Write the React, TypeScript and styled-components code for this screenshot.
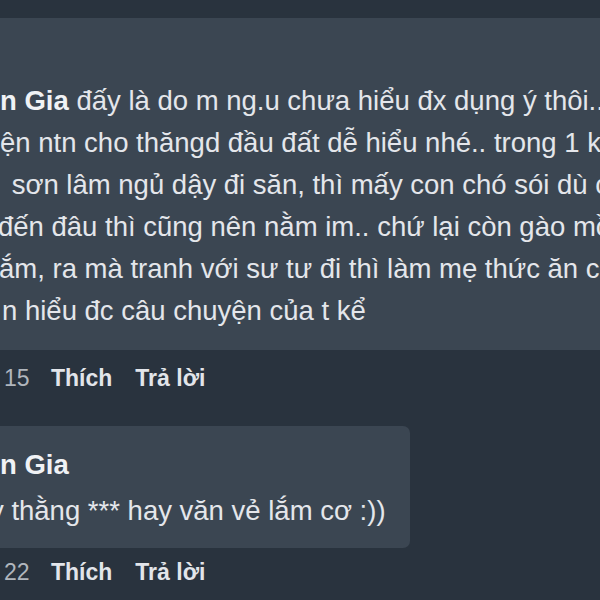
import React from 'react';
import styled, { createGlobalStyle } from 'styled-components';

const GlobalStyle = createGlobalStyle`
  html, body {
    margin: 0;
    padding: 0;
    background: #29333e;
  }
  body {
    font-family: "Liberation Sans", Arial, sans-serif;
  }
`;

const Screen = styled.div`
  width: 600px;
  height: 600px;
  overflow: hidden;
  background: #29333e;
  padding-top: 18px;
  box-sizing: border-box;
`;

const Bubble = styled.div<{ $width?: string }>`
  background: #3b4652;
  margin-left: -12px;
  width: ${(p) => p.$width || '640px'};
  box-sizing: border-box;
  border-radius: 7px;
  color: #e4e6eb;
  font-size: 27.5px;
  overflow: hidden;
`;

const Body = styled.div<{ $pt: number; $pb: number }>`
  padding: ${(p) => p.$pt}px 0 ${(p) => p.$pb}px 12px;
  display: flex;
  flex-direction: column;
`;

const Line = styled.div<{ $shift?: number; $lh?: number }>`
  white-space: pre;
  line-height: ${(p) => p.$lh || 42}px;
  margin-left: ${(p) => p.$shift || 0}px;
`;

const Name = styled.span`
  font-weight: bold;
  color: #f0f2f5;
`;

const Actions = styled.div<{ $h: number }>`
  display: flex;
  align-items: center;
  height: ${(p) => p.$h}px;
  gap: 23px;
  padding-left: 4px;
  font-size: 23px;
`;

const Count = styled.span`
  color: #b0b6bd;
  width: 24px;
`;

const Link = styled.span`
  font-weight: bold;
  color: #e2e5ea;
`;

export default function App() {
  return (
    <Screen>
      <GlobalStyle />
      <Bubble>
        <Body $pt={62} $pb={18}>
          <Line $shift={0}>
            <Name>n Gia</Name> đấy là do m ng.u chưa hiểu đx dụng ý thôi...
          </Line>
          <Line>ện ntn cho thăngd đầu đất dễ hiểu nhé.. trong 1 khu rừng</Line>
          <Line $shift={4}> sơn lâm ngủ dậy đi săn, thì mấy con chó sói dù có</Line>
          <Line $shift={-2}>đến đâu thì cũng nên nằm im.. chứ lại còn gào mồm</Line>
          <Line $shift={-1}>ắm, ra mà tranh với sư tư đi thì làm mẹ thức ăn cho</Line>
          <Line $shift={2}>n hiểu đc câu chuyện của t kể</Line>
        </Body>
      </Bubble>
      <Actions $h={56}>
        <Count>15</Count>
        <Link>Thích</Link>
        <Link>Trả lời</Link>
      </Actions>
      <div style={{ height: 20 }} />
      <Bubble $width="422px">
        <Body $pt={16} $pb={14}>
          <Line $shift={0} $lh={46}>
            <Name>n Gia</Name>
          </Line>
          <Line $shift={-10} $lh={46}>y thằng *** hay văn vẻ lắm cơ :))</Line>
        </Body>
      </Bubble>
      <Actions $h={48}>
        <Count>22</Count>
        <Link>Thích</Link>
        <Link>Trả lời</Link>
      </Actions>
    </Screen>
  );
}
